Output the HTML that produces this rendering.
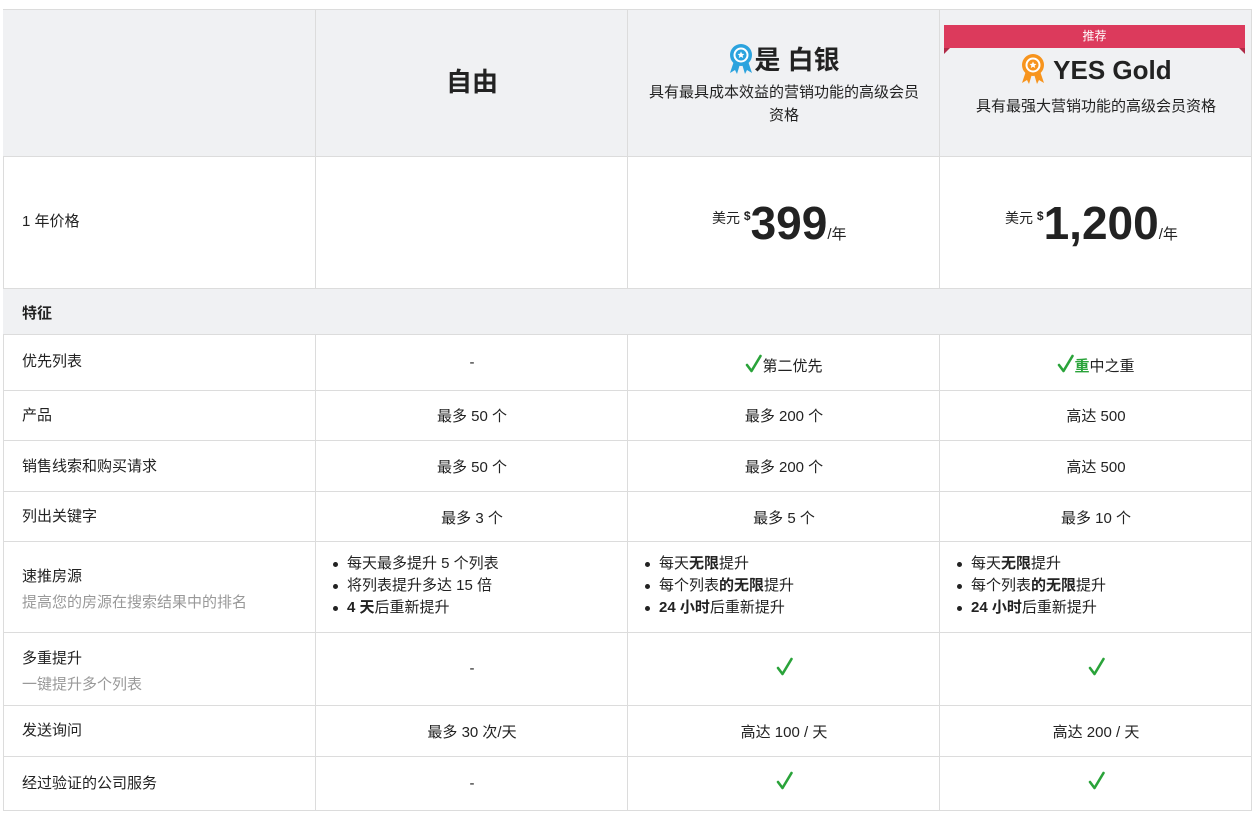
<!DOCTYPE html>
<html><head><meta charset="utf-8"><style>
*{margin:0;padding:0;box-sizing:border-box}
body{width:1258px;height:814px;background:#fff;font-family:"Liberation Sans","Noto Sans CJK SC",sans-serif;color:#222;position:relative;overflow:hidden;font-size:15px}
.c{position:absolute;border-right:1px solid #dcdcdc;border-bottom:1px solid #dcdcdc}
.g{background:#f0f1f3}
.t{position:absolute;white-space:nowrap}
.ctr{text-align:center}
ul{list-style:none}
li{position:relative;padding-left:17px;line-height:22px;font-size:15px}
li:before{content:"";position:absolute;left:3px;top:9px;width:5px;height:5px;border-radius:50%;background:#222}
.sub{color:#999}
.ck{display:inline-block;width:17px;height:19px;vertical-align:-2px}
</style></head><body>
<svg width="0" height="0" style="position:absolute"><defs><symbol id="ck" viewBox="0 0 17 19"><path d="M2 11 L6.5 17 L15.5 2" fill="none" stroke="#2aa33a" stroke-width="2.6" stroke-linecap="round" stroke-linejoin="round"/></symbol></defs></svg>
<div style="position:absolute;left:3px;top:9px;width:1249px;height:802px;border-left:1px solid #dcdcdc;border-top:1px solid #dcdcdc"></div>
<div class="c g" style="left:3px;top:10px;width:313px;height:147px"></div>
<div class="c g" style="left:316px;top:10px;width:312px;height:147px"></div>
<div class="c g" style="left:628px;top:10px;width:312px;height:147px"></div>
<div class="c g" style="left:940px;top:10px;width:312px;height:147px"></div>
<script>
var rows=[[157,289],[335,391],[391,441],[441,492],[492,542],[542,633],[633,706],[706,757],[757,811]];
var xs=[[3,313],[316,312],[628,312],[940,312]];
rows.forEach(function(r){xs.forEach(function(x){document.write('<div class="c" style="left:'+x[0]+'px;top:'+r[0]+'px;width:'+x[1]+'px;height:'+(r[1]-r[0])+'px"></div>')})});
</script>
<div class="c g" style="left:3px;top:289px;width:1249px;height:46px"></div>

<div class="t ctr" style="left:316px;width:312px;top:62px;font-size:26px;font-weight:bold">自由</div>
<div class="t ctr" style="left:628px;width:312px;top:40px;font-size:26px;font-weight:bold">
<svg width="26" height="32" viewBox="0 0 26 32" style="vertical-align:-6px"><path d="M6 18 L2 30 L7 27 L9 31 L12 21Z M20 18 L24 30 L19 27 L17 31 L14 21Z" fill="#2ba3de"/><circle cx="13" cy="12" r="11" fill="#2ba3de"/><circle cx="13" cy="12" r="7.5" fill="#fff"/><circle cx="13" cy="12" r="5.5" fill="#2ba3de"/><path d="M13 8.5l1 2.3 2.4.2-1.8 1.6.6 2.4-2.2-1.3-2.2 1.3.6-2.4-1.8-1.6 2.4-.2z" fill="#fff"/></svg>是 白银</div>
<div class="t ctr" style="left:628px;width:312px;top:81px;font-size:15px;line-height:23px;white-space:normal;padding:0 14px">具有最具成本效益的营销功能的高级会员资格</div>

<div style="position:absolute;left:944px;top:25px;width:301px;height:23px;background:#dc3a5c;color:#fff;font-size:12px;text-align:center;line-height:23px">推荐</div>
<div style="position:absolute;left:944px;top:48px;width:0;height:0;border-top:6px solid #b02a47;border-left:6px solid transparent;transform:scaleX(-1)"></div>
<div style="position:absolute;left:1239px;top:48px;width:0;height:0;border-top:6px solid #b02a47;border-left:6px solid transparent"></div>
<div class="t ctr" style="left:940px;width:312px;top:53px;font-size:26px;font-weight:bold">
<svg width="26" height="32" viewBox="0 0 26 32" style="vertical-align:-6px"><path d="M6 18 L2 30 L7 27 L9 31 L12 21Z M20 18 L24 30 L19 27 L17 31 L14 21Z" fill="#f7941d"/><circle cx="13" cy="12" r="11" fill="#f7941d"/><circle cx="13" cy="12" r="7.5" fill="#fff"/><circle cx="13" cy="12" r="5.5" fill="#f7941d"/><path d="M13 8.5l1 2.3 2.4.2-1.8 1.6.6 2.4-2.2-1.3-2.2 1.3.6-2.4-1.8-1.6 2.4-.2z" fill="#fff"/></svg> YES Gold</div>
<div class="t ctr" style="left:940px;width:312px;top:95px;font-size:15px">具有最强大营销功能的高级会员资格</div>

<div class="t" style="left:22px;top:210px">1 年价格</div>
<div class="t" style="left:712px;top:196px;font-size:14px">美元 <b style="font-size:12px;vertical-align:3px">$</b><span style="font-size:46px;font-weight:bold;vertical-align:-16px">399</span><span style="font-size:15px;vertical-align:-16px">/年</span></div>
<div class="t" style="left:1005px;top:196px;font-size:14px">美元 <b style="font-size:12px;vertical-align:3px">$</b><span style="font-size:46px;font-weight:bold;vertical-align:-16px">1,200</span><span style="font-size:15px;vertical-align:-16px">/年</span></div>

<div class="t" style="left:22px;top:302px;font-weight:bold">特征</div>

<div class="t" style="left:22px;top:350px">优先列表</div>
<div class="t ctr" style="left:316px;width:312px;top:354px">-</div>
<div class="t ctr" style="left:628px;width:312px;top:354px"><svg class="ck"><use href="#ck"/></svg>第二优先</div>
<div class="t ctr" style="left:940px;width:312px;top:354px"><svg class="ck"><use href="#ck"/></svg><b style="color:#2aa33a">重</b>中之重</div>

<div class="t" style="left:22px;top:404px">产品</div>
<div class="t ctr" style="left:316px;width:312px;top:405px">最多 50 个</div>
<div class="t ctr" style="left:628px;width:312px;top:405px">最多 200 个</div>
<div class="t ctr" style="left:940px;width:312px;top:405px">高达 500</div>

<div class="t" style="left:22px;top:455px">销售线索和购买请求</div>
<div class="t ctr" style="left:316px;width:312px;top:456px">最多 50 个</div>
<div class="t ctr" style="left:628px;width:312px;top:456px">最多 200 个</div>
<div class="t ctr" style="left:940px;width:312px;top:456px">高达 500</div>

<div class="t" style="left:22px;top:505px">列出关键字</div>
<div class="t ctr" style="left:316px;width:312px;top:507px">最多 3 个</div>
<div class="t ctr" style="left:628px;width:312px;top:507px">最多 5 个</div>
<div class="t ctr" style="left:940px;width:312px;top:507px">最多 10 个</div>

<div class="t" style="left:22px;top:565px">速推房源</div>
<div class="t sub" style="left:22px;top:591px">提高您的房源在搜索结果中的排名</div>
<ul class="t" style="left:330px;top:553px"><li>每天最多提升 5 个列表</li><li>将列表提升多达 15 倍</li><li><b>4 天</b>后重新提升</li></ul>
<ul class="t" style="left:642px;top:553px"><li>每天<b>无限</b>提升</li><li>每个列表<b>的无限</b>提升</li><li><b>24 小时</b>后重新提升</li></ul>
<ul class="t" style="left:954px;top:553px"><li>每天<b>无限</b>提升</li><li>每个列表<b>的无限</b>提升</li><li><b>24 小时</b>后重新提升</li></ul>

<div class="t" style="left:22px;top:647px">多重提升</div>
<div class="t sub" style="left:22px;top:673px">一键提升多个列表</div>
<div class="t ctr" style="left:316px;width:312px;top:660px">-</div>
<div class="t ctr" style="left:628px;width:312px;top:657px"><svg class="ck"><use href="#ck"/></svg></div>
<div class="t ctr" style="left:940px;width:312px;top:657px"><svg class="ck"><use href="#ck"/></svg></div>

<div class="t" style="left:22px;top:719px">发送询问</div>
<div class="t ctr" style="left:316px;width:312px;top:721px">最多 30 次/天</div>
<div class="t ctr" style="left:628px;width:312px;top:721px">高达 100 / 天</div>
<div class="t ctr" style="left:940px;width:312px;top:721px">高达 200 / 天</div>

<div class="t" style="left:22px;top:772px">经过验证的公司服务</div>
<div class="t ctr" style="left:316px;width:312px;top:775px">-</div>
<div class="t ctr" style="left:628px;width:312px;top:771px"><svg class="ck"><use href="#ck"/></svg></div>
<div class="t ctr" style="left:940px;width:312px;top:771px"><svg class="ck"><use href="#ck"/></svg></div>
</body></html>
